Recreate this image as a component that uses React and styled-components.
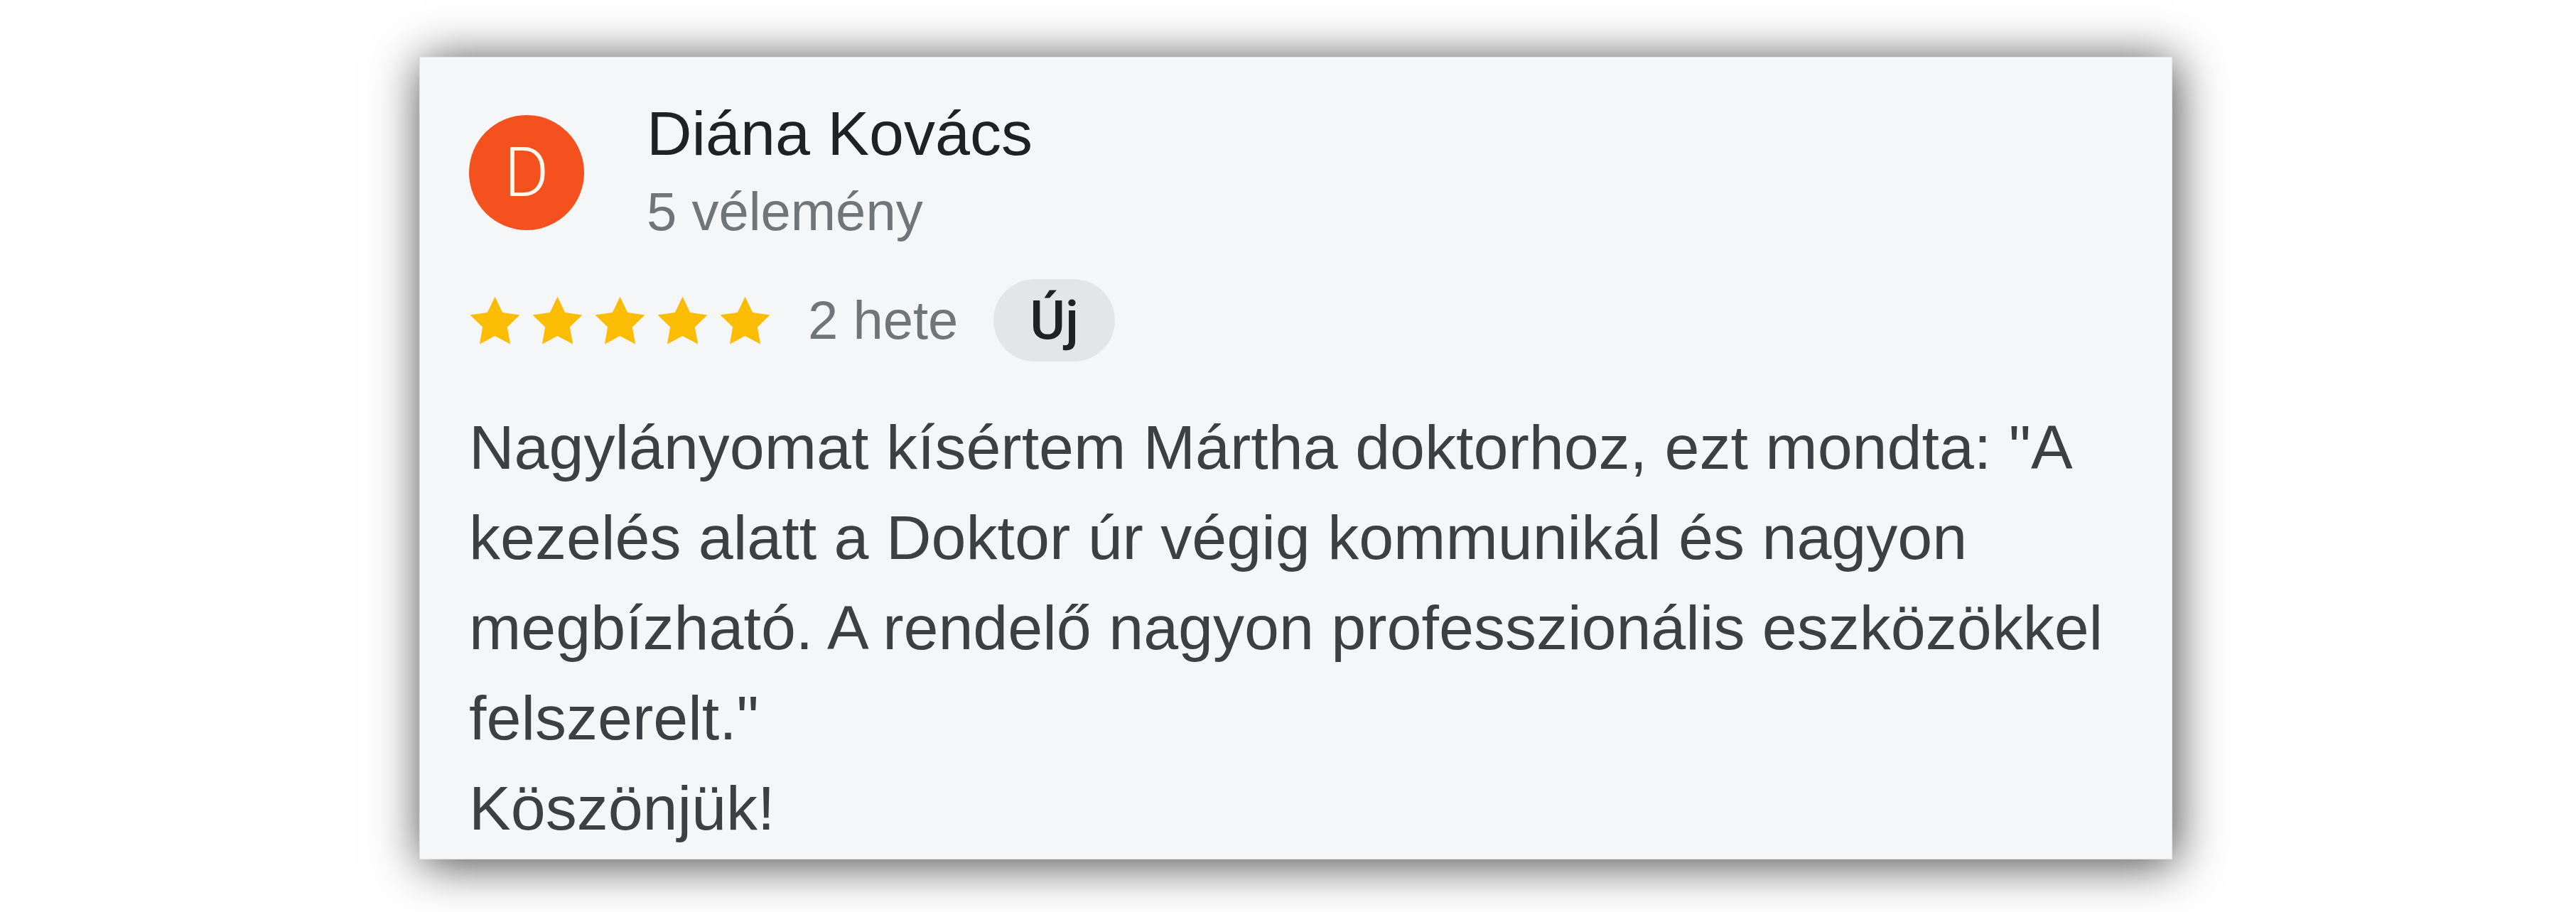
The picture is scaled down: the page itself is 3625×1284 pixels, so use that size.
import styled, { createGlobalStyle } from 'styled-components';

const GlobalStyle = createGlobalStyle`
  html, body {
    margin: 0;
    padding: 0;
    background: #ffffff;
  }
  body {
    font-family: 'Liberation Sans', Arial, sans-serif;
  }
`;

const Page = styled.div`
  width: 100vw;
  height: 100vh;
  display: flex;
  align-items: center;
  justify-content: center;
  padding-left: 22px;
  padding-top: 6px;
  box-sizing: border-box;
`;

const Card = styled.div`
  width: 2467px;
  box-sizing: border-box;
  padding: 52px 68px 8px 69px;
  background: #f5f6f8;
  border: 1px solid #e2e3e6;
  box-shadow: 4px 6px 64px rgba(0, 0, 0, 0.75);
  display: flex;
  flex-direction: column;
`;

const Header = styled.div`
  display: flex;
  align-items: center;
  gap: 88px;
`;

const Avatar = styled.div`
  width: 162px;
  height: 162px;
  border-radius: 50%;
  background: ${(p) => p.$color};
  color: #fff8ee;
  display: flex;
  align-items: center;
  justify-content: center;
  font-family: Roboto, 'Liberation Sans', sans-serif;
  font-weight: 300;
  font-size: 96px;
  flex-shrink: 0;
`;

const Who = styled.div`
  display: flex;
  flex-direction: column;
`;

const Name = styled.div`
  font-size: 88px;
  line-height: 110px;
  color: #202124;
`;

const Meta = styled.span`
  font-size: 76px;
  line-height: 110px;
  color: #70757a;
  white-space: nowrap;
`;

const RatingRow = styled.div`
  display: flex;
  align-items: center;
  margin-top: 40px;
  height: 116px;
  gap: 50px;
`;

const Stars = styled.div`
  display: flex;
  gap: 15px;
  margin-right: 2px;
`;

const Badge = styled.span`
  height: 116px;
  line-height: 116px;
  padding: 0 51px;
  border-radius: 58px;
  background: #e3e5e8;
  color: #202124;
  font-family: Roboto, 'Liberation Sans', sans-serif;
  font-weight: 500;
  font-size: 76px;
`;

const Body = styled.p`
  margin: 57px 0 0;
  font-size: 88px;
  line-height: 127px;
  color: #3c4043;
`;

function Star() {
  return (
    <svg width="73" height="70" viewBox="0 0 24 23">
      <path
        d="M12 0.6l3.5 7.3 8 1.1-5.8 5.6 1.4 7.9L12 18.7l-7.1 3.8 1.4-7.9L0.5 9l8-1.1z"
        fill="#fbbc04"
      />
    </svg>
  );
}

const review = {
  initial: 'D',
  color: '#f4511e',
  name: 'Diána Kovács',
  count: '5 vélemény',
  rating: 5,
  when: '2 hete',
  text: 'Nagylányomat kísértem Mártha doktorhoz, ezt mondta: "A kezelés alatt a Doktor úr végig kommunikál és nagyon megbízható. A rendelő nagyon professzionális eszközökkel felszerelt."',
  closing: 'Köszönjük!',
};

export default function App() {
  return (
    <>
      <GlobalStyle />
      <Page>
        <Card>
          <Header>
            <Avatar $color={review.color}>{review.initial}</Avatar>
            <Who>
              <Name>{review.name}</Name>
              <Meta>{review.count}</Meta>
            </Who>
          </Header>
          <RatingRow>
            <Stars>
              {Array.from({ length: review.rating }).map((_, i) => (
                <Star key={i} />
              ))}
            </Stars>
            <Meta>{review.when}</Meta>
            <Badge>Új</Badge>
          </RatingRow>
          <Body>
            {review.text}
            <br />
            {review.closing}
          </Body>
        </Card>
      </Page>
    </>
  );
}
